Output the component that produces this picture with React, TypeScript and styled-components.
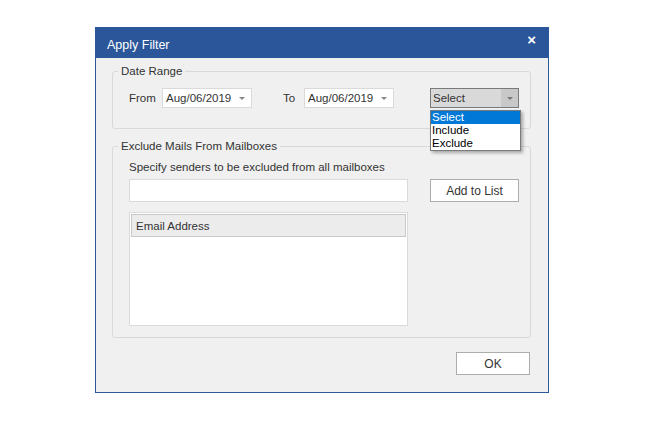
import React from "react";
import styled, { createGlobalStyle } from "styled-components";

const Global = createGlobalStyle`
  body { margin: 0; background: #fff; font-family: "Liberation Sans", Arial, sans-serif; font-size: 11.5px; color: #222; }
`;

const Dialog = styled.div`
  margin: 27px 0 0 95px;
  width: 452px;
  height: 364px;
  border: 1px solid #2b579a;
  background: #f0f0f0;
  display: flex;
  flex-direction: column;
`;

const TitleBar = styled.div`
  height: 30px;
  background: #2b579a;
  color: #fff;
  display: flex;
  align-items: center;
  justify-content: space-between;
  padding: 4px 12px 0 11px;
  box-sizing: border-box;
  font-size: 12.5px;
`;

const Close = styled.span`
  font-size: 15px;
  font-weight: bold;
  margin-top: -11px;
`;

const Body = styled.div`
  padding: 13px 17px 0 16px;
  display: flex;
  flex-direction: column;
`;

const Group = styled.div<{ $h: number; $mt?: number }>`
  position: relative;
  height: ${(p) => p.$h}px;
  margin-top: ${(p) => p.$mt ?? 0}px;
  border: 1px solid #d9d9d9;
  border-radius: 3px;
  box-sizing: border-box;
`;

const Legend = styled.span`
  position: absolute;
  top: -8px;
  left: 5px;
  padding: 0 3px;
  background: #f0f0f0;
  color: #333;
  line-height: 15px;
`;

const DateRow = styled.div`
  display: flex;
  align-items: center;
  padding: 16px 0 0 16px;
`;

const Label = styled.span<{ $w: number; $ml?: number }>`
  width: ${(p) => p.$w}px;
  margin-left: ${(p) => p.$ml ?? 0}px;
  color: #333;
`;

const DateBox = styled.div`
  width: 90px;
  height: 20px;
  box-sizing: border-box;
  background: #fff;
  border: 1px solid #dadada;
  display: flex;
  align-items: center;
  justify-content: space-between;
  padding: 0 6px 0 3px;
  color: #333;
`;

const Caret = styled.span<{ $c?: string }>`
  width: 0;
  height: 0;
  border-left: 3px solid transparent;
  border-right: 3px solid transparent;
  border-top: 3px solid ${(p) => p.$c ?? "#888"};
`;

const SelectBox = styled.div`
  margin-left: 36px;
  width: 89px;
  height: 20px;
  box-sizing: border-box;
  background: #d9d9d9;
  border: 1px solid #7a7a7a;
  display: flex;
  align-items: center;
  color: #333;
`;

const SelectText = styled.span`
  flex: 1;
  padding-left: 2px;
`;

const SelectBtn = styled.span`
  width: 17px;
  align-self: stretch;
  background: #c8c8c8;
  display: flex;
  align-items: center;
  justify-content: center;
`;

const Menu = styled.div`
  position: absolute;
  left: 317px;
  top: 38px;
  width: 89px;
  background: #fff;
  border: 1px solid #7a7a7a;
  box-shadow: 2px 2px 3px rgba(0, 0, 0, 0.3);
  z-index: 2;
`;

const MenuItem = styled.div<{ $sel?: boolean }>`
  height: 13px;
  line-height: 13px;
  padding-left: 1px;
  background: ${(p) => (p.$sel ? "#0078d7" : "#fff")};
  color: ${(p) => (p.$sel ? "#fff" : "#000")};
`;

const GroupContent = styled.div`
  padding: 12px 0 0 16px;
  display: flex;
  flex-direction: column;
`;

const Hint = styled.div`
  line-height: 16px;
  color: #333;
`;

const InputRow = styled.div`
  display: flex;
  gap: 22px;
  margin-top: 4px;
`;

const TextInput = styled.div`
  width: 279px;
  height: 23px;
  box-sizing: border-box;
  background: #fff;
  border: 1px solid #dadada;
`;

const Button = styled.div<{ $w: number }>`
  width: ${(p) => p.$w}px;
  height: 23px;
  box-sizing: border-box;
  background: #fff;
  border: 1px solid #adadad;
  display: flex;
  align-items: center;
  justify-content: center;
  color: #333;
  font-size: 12px;
`;

const List = styled.div`
  margin-top: 10px;
  width: 279px;
  height: 114px;
  box-sizing: border-box;
  background: #fff;
  border: 1px solid #dadada;
  padding: 1px;
`;

const ListHeader = styled.div`
  height: 23px;
  box-sizing: border-box;
  background: #ececec;
  border: 1px solid #c8c8c8;
  display: flex;
  align-items: center;
  padding-left: 4px;
  color: #333;
`;

const Footer = styled.div`
  display: flex;
  justify-content: flex-end;
  margin-top: 14px;
  padding-right: 1px;
`;

export default function App() {
  return (
    <>
      <Global />
      <Dialog>
        <TitleBar>
          <span>Apply Filter</span>
          <Close>×</Close>
        </TitleBar>
        <Body>
          <Group $h={58}>
            <Legend>Date Range</Legend>
            <DateRow>
              <Label $w={33}>From</Label>
              <DateBox>
                <span>Aug/06/2019</span>
                <Caret />
              </DateBox>
              <Label $w={21} $ml={31}>To</Label>
              <DateBox>
                <span>Aug/06/2019</span>
                <Caret />
              </DateBox>
              <SelectBox>
                <SelectText>Select</SelectText>
                <SelectBtn>
                  <Caret $c="#777" />
                </SelectBtn>
              </SelectBox>
            </DateRow>
            <Menu>
              <MenuItem $sel>Select</MenuItem>
              <MenuItem>Include</MenuItem>
              <MenuItem>Exclude</MenuItem>
            </Menu>
          </Group>
          <Group $h={192} $mt={17}>
            <Legend>Exclude Mails From Mailboxes</Legend>
            <GroupContent>
              <Hint>Specify senders to be excluded from all mailboxes</Hint>
              <InputRow>
                <TextInput />
                <Button $w={89}>Add to List</Button>
              </InputRow>
              <List>
                <ListHeader>Email Address</ListHeader>
              </List>
            </GroupContent>
          </Group>
          <Footer>
            <Button $w={74}>OK</Button>
          </Footer>
        </Body>
      </Dialog>
    </>
  );
}
